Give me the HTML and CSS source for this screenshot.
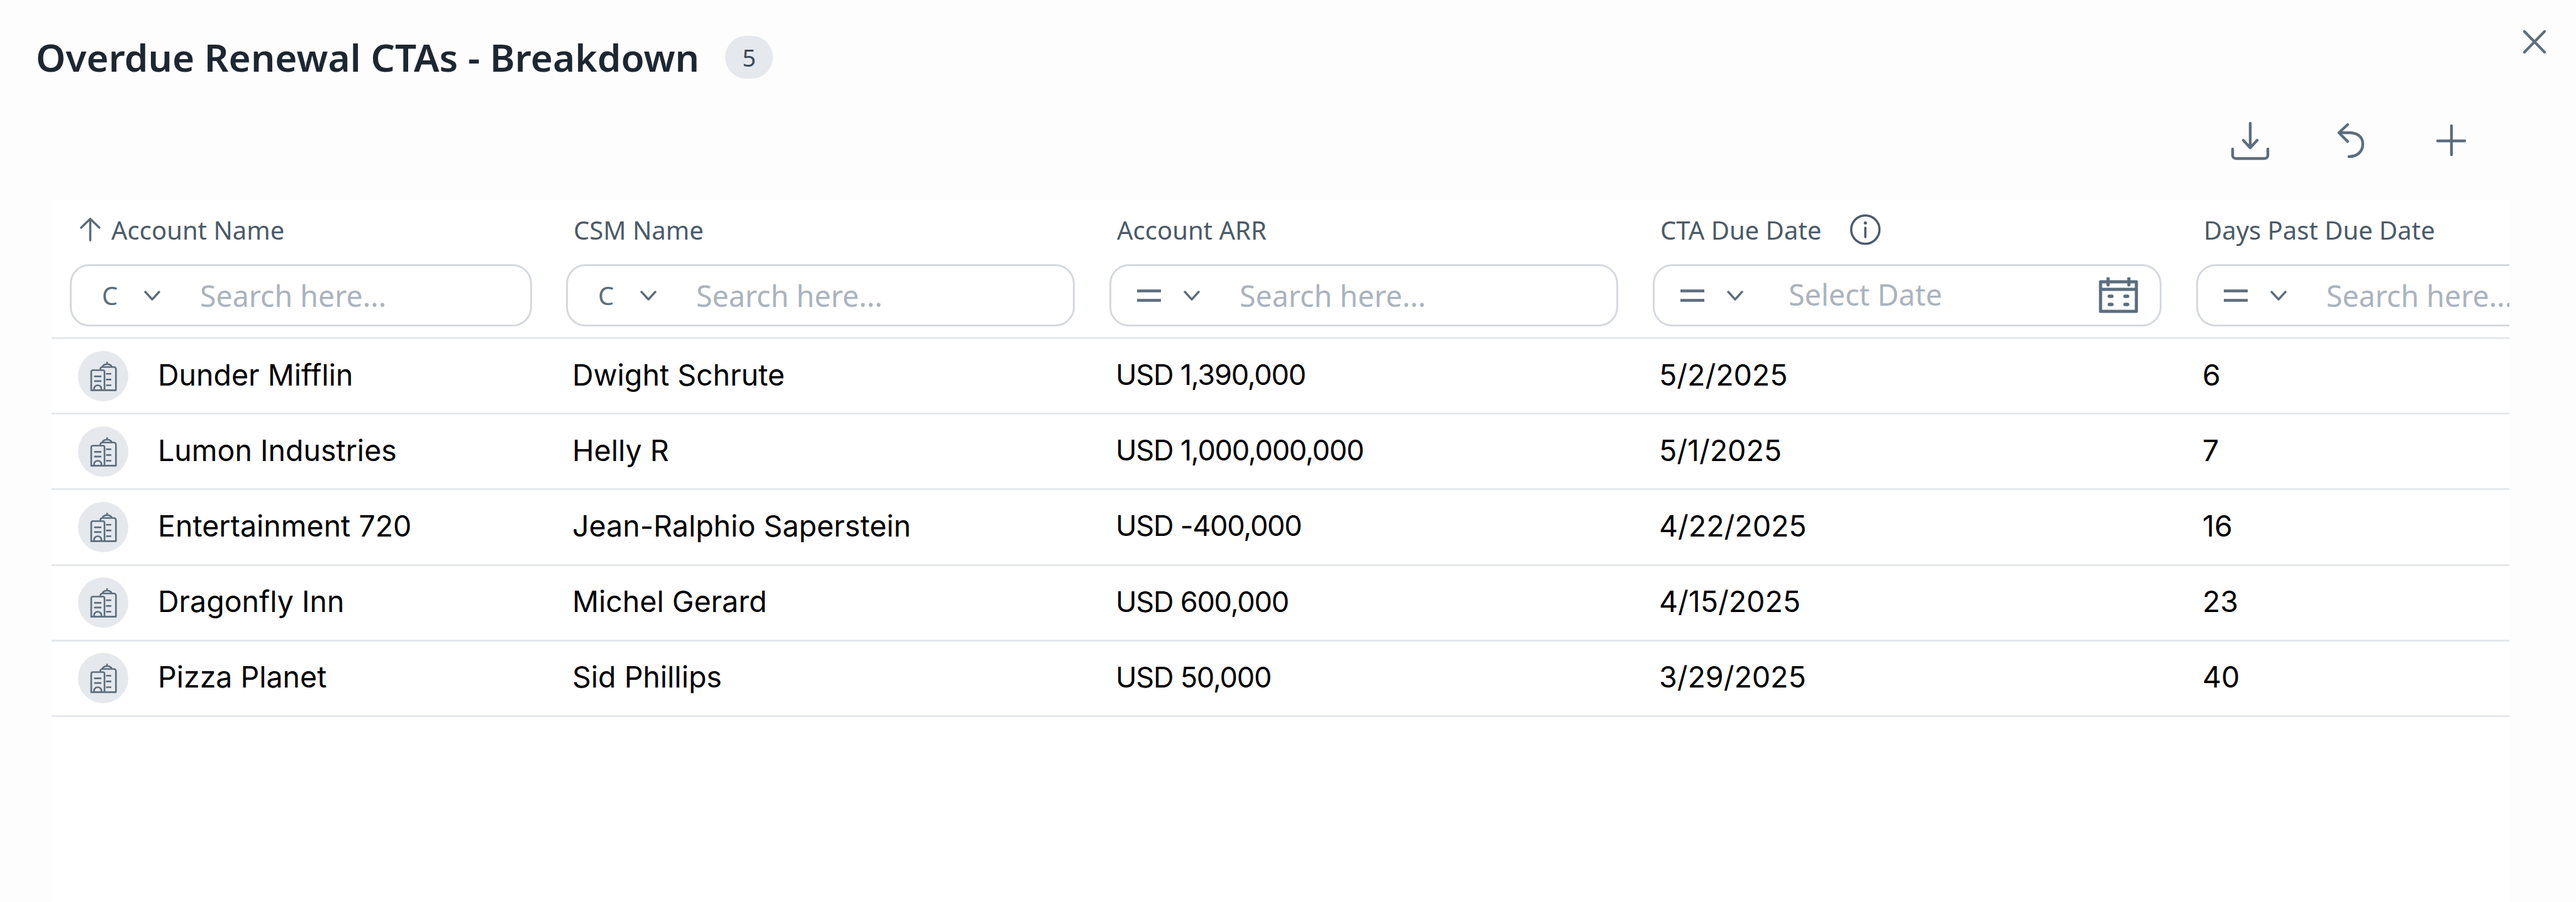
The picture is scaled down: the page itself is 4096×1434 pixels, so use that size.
FILE: index.html
```html
<!DOCTYPE html>
<html lang="en">
<head>
    <meta charset="UTF-8">
    <meta name="viewport" content="width=device-width, initial-scale=1.0">
    <title>Overdue Renewal CTAs - Breakdown</title>
    <link rel="stylesheet" href="styles.css">
</head>
<body>
    <svg class="sprites" width="0" height="0" aria-hidden="true">
        <symbol id="chevron" viewBox="0 0 26 16"><path d="M2 2l11 12L24 2"/></symbol>
        <symbol id="equals" viewBox="0 0 38 20"><path d="M0 2.5h38M0 17.5h38"/></symbol>
        <symbol id="building" viewBox="0 0 52 57">
            <path d="M1 55.5h50M2.5 55.5V20a3 3 0 0 1 3-3H25a3 3 0 0 1 3 3v35.500"/>
            <path d="M20 16v-1a4 4 0 0 1 4-4h22a4 4 0 0 1 4 4v40.500M24 11c1-4 5-5.500 9-5.500s8 1.500 9 5.500M33 1v5"/>
            <path d="M8 29h14M8 38h14M8 55.500V52a7 6 0 0 1 14 0v3.500M31 24h10M31 35h10M31 46h10"/>
        </symbol>
    </svg>

    <div class="modal">
        <button class="close-btn" aria-label="Close">
            <svg viewBox="0 0 36 37"><path d="M2 2l32 33M34 2L2 35"/></svg>
        </button>

        <div class="title-row">
            <h1>Overdue Renewal CTAs - Breakdown</h1>
            <span class="count">5</span>
        </div>

        <div class="toolbar">
            <svg class="tool" viewBox="0 0 64 64"><path d="M32 3v38M21 30l11 12 11-12M4 44v10a5 5 0 0 0 5 5h46a5 5 0 0 0 5-5V44"/></svg>
            <svg class="tool" viewBox="0 0 64 64"><path d="M27 5L13 18l14 14M13 18h16c13 0 22 6 22 18s-9 20-22 20"/></svg>
            <svg class="tool" viewBox="0 0 64 64"><path d="M10 31h43M32 7v46"/></svg>
        </div>

        <div class="grid-wrap">
            <div class="head-row">
                <div class="head-cell">
                    <div class="label">
                        <svg class="sort" viewBox="0 0 40 40"><path d="M20.500 37V3M6 17L20.500 3 35 17"/></svg>
                        Account Name
                    </div>
                    <div class="filter">
                        <span class="op">C</span>
                        <svg class="chevron"><use href="#chevron"/></svg>
                        <span class="placeholder">Search here...</span>
                    </div>
                </div>
                <div class="head-cell">
                    <div class="label">CSM Name</div>
                    <div class="filter">
                        <span class="op">C</span>
                        <svg class="chevron"><use href="#chevron"/></svg>
                        <span class="placeholder">Search here...</span>
                    </div>
                </div>
                <div class="head-cell">
                    <div class="label">Account ARR</div>
                    <div class="filter">
                        <svg class="equals"><use href="#equals"/></svg>
                        <svg class="chevron"><use href="#chevron"/></svg>
                        <span class="placeholder">Search here...</span>
                    </div>
                </div>
                <div class="head-cell">
                    <div class="label">
                        CTA Due Date
                        <svg class="info" viewBox="0 0 50 50">
                            <circle cx="25" cy="25" r="22.500"/>
                            <path d="M25 22v15"/>
                            <circle class="dot" cx="25" cy="14.500" r="2.500"/>
                        </svg>
                    </div>
                    <div class="filter">
                        <svg class="equals"><use href="#equals"/></svg>
                        <svg class="chevron"><use href="#chevron"/></svg>
                        <span class="placeholder date">Select Date</span>
                        <svg class="calendar" viewBox="0 0 63 57">
                            <path d="M3 7h57v47H3zM3 19h57M15 1v11M48 1v11"/>
                            <path class="dots" d="M17 30h4M42 30h4M17 43h4M42 43h4"/>
                        </svg>
                    </div>
                </div>
                <div class="head-cell">
                    <div class="label">Days Past Due Date</div>
                    <div class="filter">
                        <svg class="equals"><use href="#equals"/></svg>
                        <svg class="chevron"><use href="#chevron"/></svg>
                        <span class="placeholder">Search here...</span>
                    </div>
                </div>
            </div>

            <div class="row">
                <div class="cell account"><span class="avatar"><svg class="building"><use href="#building"/></svg></span><span class="name">Dunder Mifflin</span></div>
                <div class="cell">Dwight Schrute</div>
                <div class="cell money">USD 1,390,000</div>
                <div class="cell">5/2/2025</div>
                <div class="cell">6</div>
            </div>
            <div class="row">
                <div class="cell account"><span class="avatar"><svg class="building"><use href="#building"/></svg></span><span class="name">Lumon Industries</span></div>
                <div class="cell">Helly R</div>
                <div class="cell money">USD 1,000,000,000</div>
                <div class="cell">5/1/2025</div>
                <div class="cell">7</div>
            </div>
            <div class="row">
                <div class="cell account"><span class="avatar"><svg class="building"><use href="#building"/></svg></span><span class="name">Entertainment 720</span></div>
                <div class="cell">Jean-Ralphio Saperstein</div>
                <div class="cell money">USD -400,000</div>
                <div class="cell">4/22/2025</div>
                <div class="cell">16</div>
            </div>
            <div class="row">
                <div class="cell account"><span class="avatar"><svg class="building"><use href="#building"/></svg></span><span class="name">Dragonfly Inn</span></div>
                <div class="cell">Michel Gerard</div>
                <div class="cell money">USD 600,000</div>
                <div class="cell">4/15/2025</div>
                <div class="cell">23</div>
            </div>
            <div class="row">
                <div class="cell account"><span class="avatar"><svg class="building"><use href="#building"/></svg></span><span class="name">Pizza Planet</span></div>
                <div class="cell">Sid Phillips</div>
                <div class="cell money">USD 50,000</div>
                <div class="cell">3/29/2025</div>
                <div class="cell">40</div>
            </div>
        </div>
    </div>
</body>
</html>
```

FILE: styles.css
```css
* {
    box-sizing: border-box;
}
html, body {
    margin: 0;
    height: 100%;
    overflow: hidden;
}
body {
    font-family: "Noto Sans", sans-serif;
    background-color: #fdfdfd;
}
svg {
    fill: none;
    stroke: #5c6d7d;
    stroke-linecap: round;
    stroke-linejoin: round;
}
.sprites {
    position: absolute;
}
.modal {
    position: relative;
    display: flex;
    flex-direction: column;
    height: 100%;
    padding-top: 57px;
}
.close-btn {
    position: absolute;
    top: 48px;
    left: 4012px;
    width: 36px;
    height: 37px;
    padding: 0;
    border: none;
    background: none;
}
.close-btn svg {
    display: block;
    stroke-width: 4.2;
}
.title-row {
    display: flex;
    align-items: center;
    height: 68px;
    padding-left: 57px;
}
h1 {
    margin: 0;
    width: 1096px;
    font-size: 60.3px;
    font-weight: 600;
    color: #1d2731;
    white-space: nowrap;
}
.count {
    width: 76px;
    height: 68px;
    line-height: 68px;
    border-radius: 34px;
    text-align: center;
    font-size: 38px;
    color: #3d4a57;
    background-color: #e5e8ec;
}
.toolbar {
    display: flex;
    justify-content: flex-end;
    gap: 96px;
    margin-top: 68px;
    padding-right: 166px;
}
.tool {
    width: 64px;
    height: 64px;
    stroke-width: 4.4;
}
.grid-wrap {
    flex: 1;
    width: 3908px;
    margin-top: 60px;
    margin-left: 82px;
    overflow: hidden;
    background-color: #fff;
}
.head-row, .row {
    display: grid;
    grid-template-columns: 789px 864px 864px 864px 864px;
    padding-left: 29px;
    border-bottom: 3px solid #e5e8ec;
}
.head-row {
    height: 222px;
    padding-top: 24px;
}
.label {
    display: flex;
    align-items: center;
    height: 48px;
    padding-left: 12px;
    font-size: 40px;
    color: #4b5a68;
    white-space: nowrap;
}
.sort {
    width: 40px;
    height: 40px;
    margin-right: 14px;
    stroke-width: 3.6;
}
.info {
    width: 50px;
    height: 50px;
    margin-left: 45px;
    stroke: #4b5a68;
    stroke-width: 3.5;
}
.info .dot {
    fill: #4b5a68;
    stroke: none;
}
.filter {
    display: flex;
    align-items: center;
    width: 809px;
    height: 99px;
    margin-top: 31px;
    padding-left: 41px;
    border: 3px solid #d5d9de;
    border-radius: 31px;
    background-color: #fff;
}
.head-cell:first-child .filter {
    width: 735px;
}
.op {
    width: 74px;
    padding-left: 7px;
    font-size: 40px;
    color: #5c6d7d;
}
.equals {
    width: 38px;
    height: 20px;
    margin-right: 36px;
    stroke-width: 4.5;
    stroke-linecap: butt;
}
.chevron {
    width: 26px;
    height: 16px;
    stroke-width: 3.4;
}
.placeholder {
    margin-left: 63px;
    font-size: 46.5px;
    color: #abb3bc;
    white-space: nowrap;
}
.placeholder.date {
    flex: 1;
    margin-left: 72px;
    margin-bottom: 3px;
}
.calendar {
    width: 63px;
    height: 57px;
    margin-right: 34px;
    stroke-width: 5;
}
.calendar .dots {
    stroke-width: 5.500;
}
.row {
    height: 120.2px;
    align-items: center;
}
.cell {
    display: flex;
    align-items: center;
    padding-left: 10px;
    padding-bottom: 4px;
    font-family: "Inter", sans-serif;
    font-size: 46.5px;
    color: #000;
    white-space: nowrap;
}
.cell.money {
    font-size: 45px;
    letter-spacing: -1.2px;
}
.cell.account {
    padding-left: 13px;
    padding-bottom: 0;
}
.name {
    margin-bottom: 4px;
}
.avatar {
    display: flex;
    align-items: center;
    justify-content: center;
    width: 80px;
    height: 80px;
    margin-right: 47px;
    border-radius: 50%;
    background-color: #e5e8ec;
}
.building {
    width: 43px;
    height: 48px;
    stroke-width: 3.2;
    stroke-linecap: butt;
    stroke-linejoin: miter;
}
```
